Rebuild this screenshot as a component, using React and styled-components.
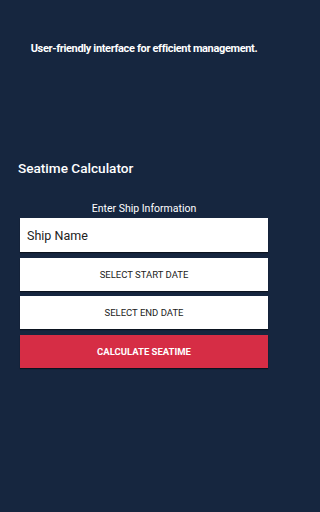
import React from "react";
import styled, { createGlobalStyle } from "styled-components";

const Global = createGlobalStyle`
  html, body { margin: 0; padding: 0; background: #16263f; }
  body { font-family: Roboto, "Liberation Sans", sans-serif; }
  * { box-sizing: border-box; }
`;

const Screen = styled.div`
  width: 288px;
  height: 512px;
  background: #16263f;
  display: flex;
  flex-direction: column;
  color: #ffffff;
`;

const Tagline = styled.div`
  margin-top: 42px;
  height: 14px;
  text-align: center;
  font-family: Roboto, sans-serif;
  font-weight: 700;
  font-size: 11px;
  letter-spacing: -0.35px;
  line-height: 14px;
`;

const Title = styled.h1`
  margin: 102px 0 0 18px;
  font-size: 13.6px;
  font-weight: 500;
  line-height: 20px;
`;

const Form = styled.div`
  margin-top: 24px;
  padding: 0 20px;
  display: flex;
  flex-direction: column;
`;

const Label = styled.div`
  text-align: center;
  font-size: 10.5px;
  line-height: 14px;
  margin-bottom: 2px;
`;

const Input = styled.div`
  height: 34px;
  background: #ffffff;
  color: #222;
  font-size: 12.5px;
  display: flex;
  align-items: center;
  padding-left: 7px;
  box-shadow: 0 1px 1px rgba(0, 0, 0, 0.5);
`;

const Button = styled.div`
  height: 33px;
  margin-top: ${(p) => p.$gap}px;
  background: ${(p) => (p.$primary ? "#d62d45" : "#ffffff")};
  color: ${(p) => (p.$primary ? "#ffffff" : "#222")};
  font-weight: ${(p) => (p.$primary ? 700 : 400)};
  font-size: 9.5px;
  text-transform: uppercase;
  display: flex;
  align-items: center;
  justify-content: center;
  box-shadow: 0 1px 1px rgba(0, 0, 0, 0.5);
`;

export default function App() {
  return (
    <>
      <Global />
      <Screen>
        <Tagline>User-friendly interface for efficient management.</Tagline>
        <Title>Seatime Calculator</Title>
        <Form>
          <Label>Enter Ship Information</Label>
          <Input>Ship Name</Input>
          <Button $gap={6}>Select Start Date</Button>
          <Button $gap={5}>Select End Date</Button>
          <Button $gap={6} $primary>Calculate Seatime</Button>
        </Form>
      </Screen>
    </>
  );
}
